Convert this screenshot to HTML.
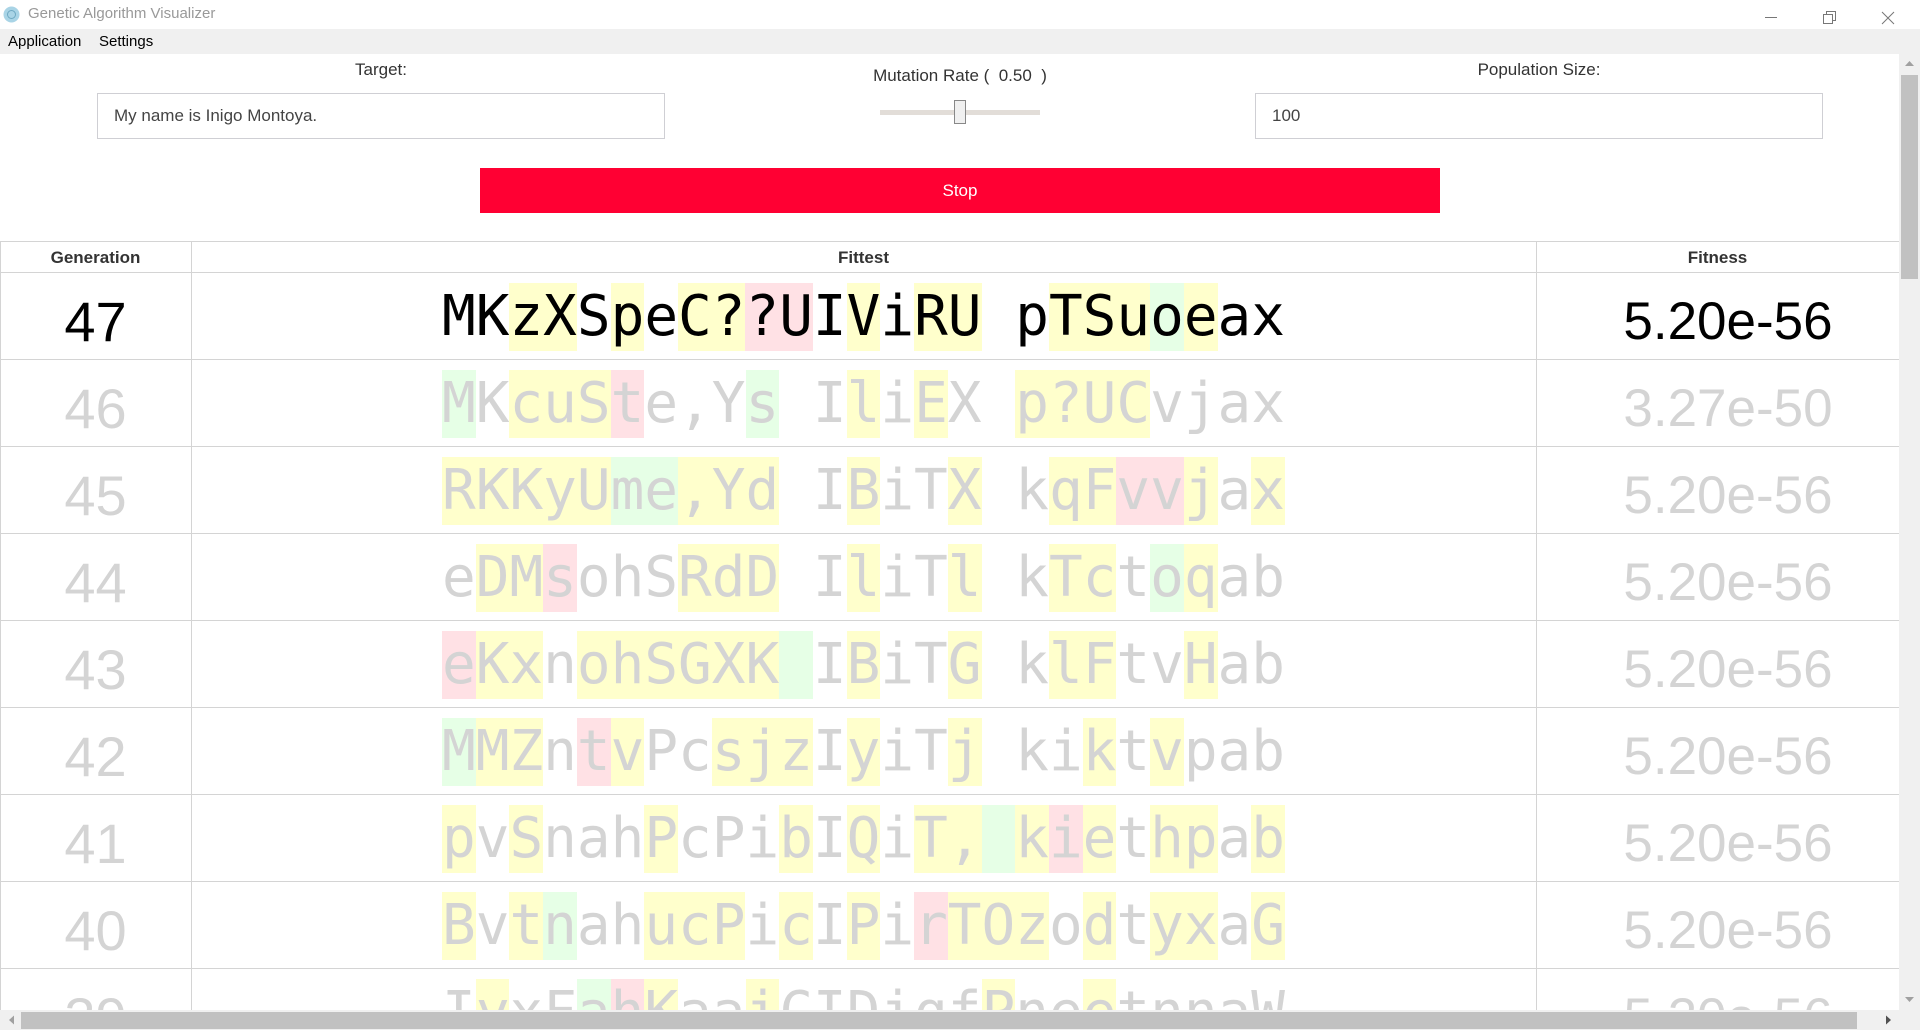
<!DOCTYPE html>
<html><head><meta charset="utf-8"><style>
*{margin:0;padding:0;box-sizing:border-box}
html,body{width:1920px;height:1030px;overflow:hidden}
body{background:#fff;font-family:"Liberation Sans",sans-serif;position:relative}
.abs{position:absolute}
.title{left:28px;top:5px;font-size:15px;color:#999;line-height:18px}
.menu{left:0;top:29px;width:1920px;height:25px;background:#f0f0f0;font-size:15px;color:#000}
.menu span{position:absolute;top:4px}
.lbl{font-size:17px;color:#333;text-align:center;line-height:20px}
.inp{border:1px solid #cfcfd4;height:46px;font-size:17px;color:#444;padding-left:16px;line-height:44px}
.btn{left:480px;top:168px;width:960px;height:45px;background:#ff0033;color:#fff;font-size:17px;text-align:center;line-height:45px}
.clip{position:absolute;left:0;top:0;width:1920px;height:1010px;overflow:hidden}
.row{position:absolute;left:0;width:1899px;height:87px;border-bottom:1px solid #d4d4d4}
.gen,.fit{position:absolute;top:5px;height:82px;line-height:87px;font-size:56px;text-align:center}
.gen{left:0;width:191px}
.fit{left:1536px;width:384px;font-size:53px}
.mono{position:absolute;left:191px;width:1345px;top:10px;text-align:center;font-family:"DejaVu Sans Mono","Liberation Mono",monospace;font-size:56px;line-height:68px;white-space:pre;height:68px}
.mono span{display:inline-block;height:68px;vertical-align:top}
.y{background:#ffffcc}.g{background:#e6ffe6}.r{background:#ffe1e5}
.old{color:#d4d4d4}
.cur{color:#000}
.vl{position:absolute;top:242px;width:1px;height:768px;background:#d4d4d4}
</style></head><body>
<svg class="abs" style="left:3px;top:6px" width="17" height="17"><circle cx="8.5" cy="8.5" r="8" fill="#a9d4e6"/><circle cx="8.5" cy="8.5" r="4" fill="none" stroke="#6fa9c2" stroke-width="1"/></svg>
<div class="abs title">Genetic Algorithm Visualizer</div>
<svg class="abs" style="left:1760px;top:4px" width="150" height="24"><line x1="5" y1="13.5" x2="17" y2="13.5" stroke="#777" stroke-width="1"/><rect x="63.5" y="10.5" width="9" height="9" fill="none" stroke="#777"/><path d="M66.5 10.5V7.5H75.5V16.5H72.5" fill="none" stroke="#777"/><path d="M122 8L134 20M134 8L122 20" stroke="#777" stroke-width="1"/></svg>
<div class="abs menu"><span style="left:8px">Application</span><span style="left:99px">Settings</span></div>

<div class="abs lbl" style="left:97px;width:568px;top:60px">Target:</div>
<div class="abs inp" style="left:97px;top:93px;width:568px">My name is Inigo Montoya.</div>
<div class="abs lbl" style="left:760px;width:400px;top:66px">Mutation Rate (&nbsp;&nbsp;0.50&nbsp;&nbsp;)</div>
<div class="abs" style="left:880px;top:110px;width:160px;height:5px;background:#e2ddd8"></div>
<div class="abs" style="left:954px;top:100px;width:12px;height:24px;background:#f0f0f0;border:1px solid #888"></div>
<div class="abs lbl" style="left:1255px;width:568px;top:60px">Population Size:</div>
<div class="abs inp" style="left:1255px;top:93px;width:568px">100</div>
<div class="abs btn">Stop</div>

<div class="clip">
<div class="abs" style="left:0;top:241px;width:1899px;height:1px;background:#d4d4d4"></div>
<div class="abs" style="left:0;top:242px;width:1899px;height:31px;border-bottom:1px solid #d4d4d4;font-weight:bold;font-size:17px;color:#333;line-height:31px">
<div class="abs" style="left:0;width:191px;text-align:center">Generation</div>
<div class="abs" style="left:191px;width:1345px;text-align:center">Fittest</div>
<div class="abs" style="left:1536px;width:363px;text-align:center">Fitness</div>
</div>

<div class="row cur" style="top:273px"><div class="gen">47</div><div class="mono">MK<span class="y">zX</span>S<span class="y">p</span>e<span class="y">C?</span><span class="r">?U</span>I<span class="y">V</span>i<span class="y">RU</span> p<span class="y">TSu</span><span class="g">o</span><span class="y">e</span>ax</div><div class="fit">5.20e-56</div></div>
<div class="row old" style="top:360px"><div class="gen">46</div><div class="mono"><span class="g">M</span>K<span class="y">cuS</span><span class="r">t</span>e,Y<span class="g">s</span> I<span class="y">l</span>i<span class="y">E</span>X <span class="y">p?UC</span>vjax</div><div class="fit">3.27e-50</div></div>
<div class="row old" style="top:447px"><div class="gen">45</div><div class="mono"><span class="y">RKKyU</span><span class="g">me</span><span class="y">,Yd</span> I<span class="y">B</span>iT<span class="y">X</span> k<span class="y">qF</span><span class="r">vv</span><span class="y">j</span>a<span class="y">x</span></div><div class="fit">5.20e-56</div></div>
<div class="row old" style="top:534px"><div class="gen">44</div><div class="mono">e<span class="y">DM</span><span class="r">s</span>ohS<span class="y">RdD</span> I<span class="y">l</span>iT<span class="y">l</span> k<span class="y">Tc</span>t<span class="g">o</span><span class="y">q</span>ab</div><div class="fit">5.20e-56</div></div>
<div class="row old" style="top:621px"><div class="gen">43</div><div class="mono"><span class="r">e</span><span class="y">Kx</span>n<span class="y">ohSGXK</span><span class="g"> </span>I<span class="y">B</span>iT<span class="y">G</span> k<span class="y">lF</span>tv<span class="y">H</span>ab</div><div class="fit">5.20e-56</div></div>
<div class="row old" style="top:708px"><div class="gen">42</div><div class="mono"><span class="g">M</span><span class="y">MZ</span>n<span class="r">t</span><span class="y">v</span>Pc<span class="y">sjz</span>I<span class="y">y</span>iT<span class="y">j</span> ki<span class="y">k</span>t<span class="y">v</span>pab</div><div class="fit">5.20e-56</div></div>
<div class="row old" style="top:795px"><div class="gen">41</div><div class="mono"><span class="y">p</span>v<span class="y">S</span>nah<span class="y">P</span>cPi<span class="y">b</span>I<span class="y">Q</span>i<span class="y">T,</span><span class="g"> </span><span class="y">k</span><span class="r">i</span><span class="y">e</span>t<span class="y">hp</span>a<span class="y">b</span></div><div class="fit">5.20e-56</div></div>
<div class="row old" style="top:882px"><div class="gen">40</div><div class="mono"><span class="y">B</span>v<span class="y">t</span><span class="g">n</span>ah<span class="y">ucP</span>i<span class="y">c</span>I<span class="y">P</span>i<span class="r">r</span><span class="y">TOz</span>o<span class="y">d</span>t<span class="y">yx</span>a<span class="y">G</span></div><div class="fit">5.20e-56</div></div>
<div class="row old" style="top:969px;border-bottom:none"><div class="gen">39</div><div class="mono">I<span class="y">y</span>xF<span class="g">a</span><span class="r">h</span><span class="y">K</span>aa<span class="y">i</span>CIDigf<span class="y">P</span>ne<span class="y">e</span>tnnaW</div><div class="fit">5.20e-56</div></div>

<div class="vl" style="left:0"></div>
<div class="vl" style="left:191px"></div>
<div class="vl" style="left:1536px"></div>
</div>

<div class="abs" style="left:1899px;top:54px;width:21px;height:956px;background:#f0f0f0"></div>
<svg class="abs" style="left:1899px;top:58px" width="21" height="12"><path d="M6 8L10.5 3L15 8Z" fill="#a0a0a0"/></svg>
<div class="abs" style="left:1901px;top:75px;width:17px;height:204px;background:#c1c1c1"></div>
<svg class="abs" style="left:1899px;top:993px" width="21" height="12"><path d="M6 4L10.5 9L15 4Z" fill="#a0a0a0"/></svg>
<div class="abs" style="left:0;top:1010px;width:1920px;height:20px;background:#f0f0f0"></div>
<svg class="abs" style="left:4px;top:1012px" width="14" height="16"><path d="M10 3.5L5 8L10 12.5Z" fill="#a0a0a0"/></svg>
<div class="abs" style="left:21px;top:1012px;width:1836px;height:17px;background:#c1c1c1"></div>
<svg class="abs" style="left:1882px;top:1012px" width="14" height="16"><path d="M4 3.5L9 8L4 12.5Z" fill="#505050"/></svg>
</body></html>
